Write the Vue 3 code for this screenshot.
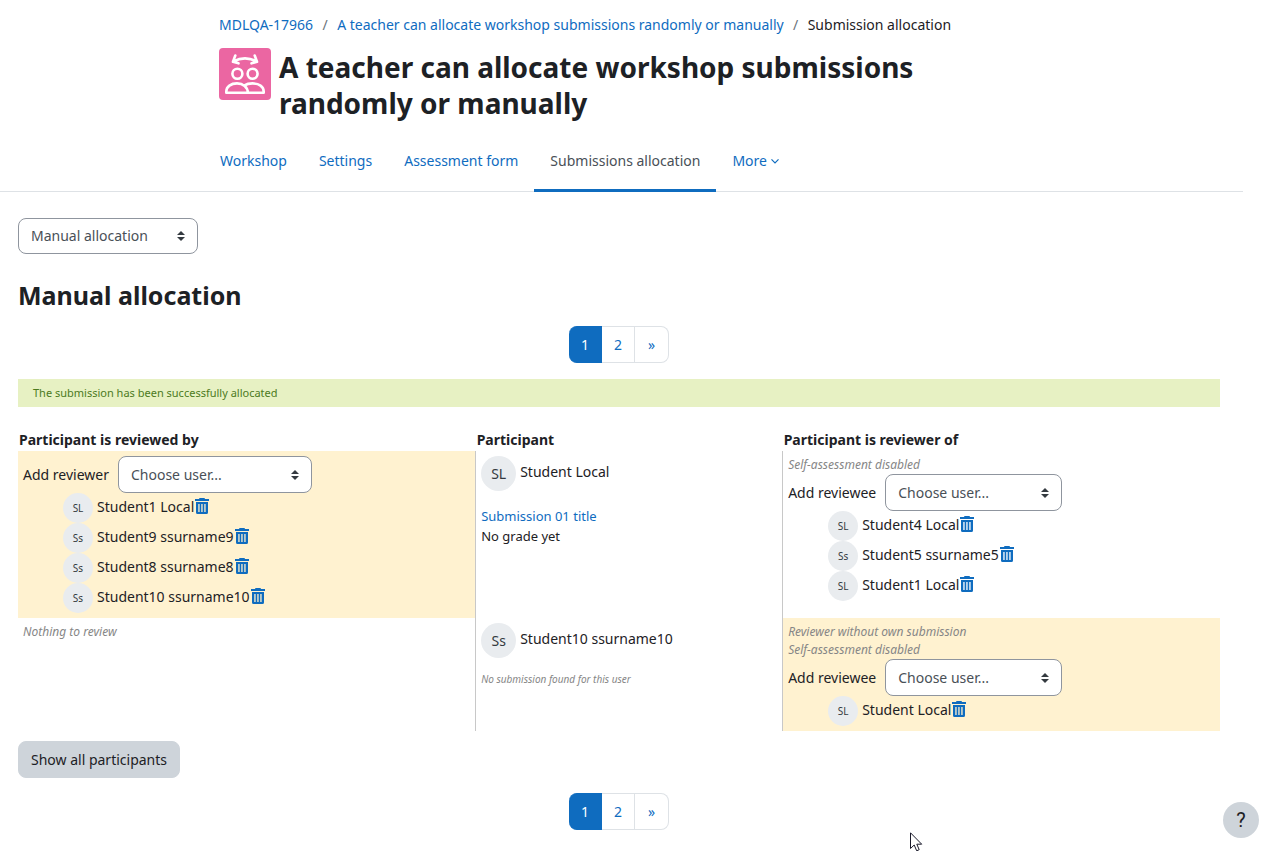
<script setup>
import { ref } from 'vue'

const tabs = [
  { label: 'Workshop' },
  { label: 'Settings' },
  { label: 'Assessment form' },
  { label: 'Submissions allocation', active: true },
  { label: 'More', menu: true },
]

const rows = [
  {
    id: 'local',
    name: 'Student Local',
    initials: 'SL',
    submission: 'Submission 01 title',
    grade: 'No grade yet',
    reviewedBy: {
      marked: true,
      canAdd: true,
      notes: [],
      people: [
        { initials: 'SL', name: 'Student1 Local' },
        { initials: 'Ss', name: 'Student9 ssurname9' },
        { initials: 'Ss', name: 'Student8 ssurname8' },
        { initials: 'Ss', name: 'Student10 ssurname10' },
      ],
    },
    reviewerOf: {
      marked: false,
      notes: ['Self-assessment disabled'],
      people: [
        { initials: 'SL', name: 'Student4 Local' },
        { initials: 'Ss', name: 'Student5 ssurname5' },
        { initials: 'SL', name: 'Student1 Local' },
      ],
    },
  },
  {
    id: 'ten',
    name: 'Student10 ssurname10',
    initials: 'Ss',
    reviewedBy: { marked: false, canAdd: false, notes: ['Nothing to review'], people: [] },
    reviewerOf: {
      marked: true,
      notes: ['Reviewer without own submission', 'Self-assessment disabled'],
      people: [{ initials: 'SL', name: 'Student Local' }],
    },
  },
]

const mode = ref('manual')
</script>

<template>
  <div class="page">
    <header class="header">
      <nav class="crumbs" aria-label="Breadcrumb">
        <a href="#">MDLQA-17966</a><span class="sep">/</span>
        <a href="#">A teacher can allocate workshop submissions randomly or manually</a><span class="sep">/</span>
        <span>Submission allocation</span>
      </nav>
      <div class="title">
        <svg class="module-icon" viewBox="0 0 52 52" aria-hidden="true">
          <rect width="52" height="52" rx="4" fill="#eb66a2" />
          <g fill="none" stroke="#fff" stroke-width="2.6" stroke-linecap="round" stroke-linejoin="round">
            <path d="M14.500 13.300Q26 7.500 37.500 13.300M16.300 7.500L14 13.800L19.500 15.300M35.700 7.500L38 13.800L32.500 15.300" />
            <circle cx="18.400" cy="25.800" r="5" />
            <circle cx="33.600" cy="25.800" r="5" />
            <path d="M7.300 44.700V43.500C7.300 38.500 12 35.400 18 35.400S28.800 39 28.800 44.700ZM25.500 37.300C27.500 36 30.500 35.400 33.500 35.400C40 35.400 44.700 38.500 44.700 43.500V44.700H28.800" />
          </g>
        </svg>
        <h1>A teacher can allocate workshop submissions randomly or manually</h1>
      </div>
    </header>

    <div class="tabbar">
      <nav class="tabs" aria-label="Workshop navigation">
        <a v-for="tab in tabs" :key="tab.label" href="#" class="tab" :class="{ active: tab.active }">
          {{ tab.label }}
          <svg v-if="tab.menu" class="chevron" viewBox="0 0 8 8" aria-hidden="true">
            <path d="M0.500 2.300L4 5.800L7.500 2.300" fill="none" stroke="currentColor" stroke-width="1.200" />
          </svg>
        </a>
      </nav>
    </div>

    <main class="content">
      <select v-model="mode" class="select mode" aria-label="Allocation mode">
        <option value="manual">Manual allocation</option>
      </select>
      <h2>Manual allocation</h2>

      <nav class="pager" aria-label="Page">
        <a href="#" class="current" aria-current="page">1</a>
        <a href="#">2</a>
        <a href="#" class="next" aria-label="Next page">»</a>
      </nav>

      <p class="message" role="status">The submission has been successfully allocated</p>

      <table class="allocations">
        <thead>
          <tr>
            <th class="col-by">Participant is reviewed by</th>
            <th class="col-who">Participant</th>
            <th class="col-of">Participant is reviewer of</th>
          </tr>
        </thead>
        <tbody>
          <tr v-for="row in rows" :key="row.id">
            <td :class="{ marked: row.reviewedBy.marked }">
              <p v-for="note in row.reviewedBy.notes" :key="note" class="note">{{ note }}</p>
              <div v-if="row.reviewedBy.canAdd" class="add">
                <label :for="'by-' + row.id">Add reviewer</label>
                <select :id="'by-' + row.id" class="select reviewer">
                  <option>Choose user...</option>
                </select>
              </div>
              <ul class="people">
                <li v-for="p in row.reviewedBy.people" :key="p.name">
                  <span class="avatar">{{ p.initials }}</span>
                  <span class="person">{{ p.name }}</span>
                  <a href="#" class="trash" :aria-label="'Deallocate ' + p.name">
                    <svg viewBox="0 0 14 16" aria-hidden="true">
                      <path fill="currentColor" fill-rule="evenodd" d="M4.500 0H9.500L10 1H14V3H0V1H4ZM1 4H13V14.500Q13 16 11.500 16H2.500Q1 16 1 14.500ZM3.300 6V14H4.600V6ZM6.300 6V14H7.600V6ZM9.300 6V14H10.600V6Z" />
                    </svg>
                  </a>
                </li>
              </ul>
            </td>
            <td>
              <div class="participant">
                <span class="avatar large">{{ row.initials }}</span>
                <span class="person">{{ row.name }}</span>
              </div>
              <div v-if="row.submission" class="submission">
                <a href="#">{{ row.submission }}</a>
                <div>{{ row.grade }}</div>
              </div>
              <p v-else class="missing">No submission found for this user</p>
            </td>
            <td :class="{ marked: row.reviewerOf.marked }">
              <p v-for="note in row.reviewerOf.notes" :key="note" class="note">{{ note }}</p>
              <div class="add">
                <label :for="'of-' + row.id">Add reviewee</label>
                <select :id="'of-' + row.id" class="select reviewee">
                  <option>Choose user...</option>
                </select>
              </div>
              <ul class="people">
                <li v-for="p in row.reviewerOf.people" :key="p.name">
                  <span class="avatar">{{ p.initials }}</span>
                  <span class="person">{{ p.name }}</span>
                  <a href="#" class="trash" :aria-label="'Deallocate ' + p.name">
                    <svg viewBox="0 0 14 16" aria-hidden="true">
                      <path fill="currentColor" fill-rule="evenodd" d="M4.500 0H9.500L10 1H14V3H0V1H4ZM1 4H13V14.500Q13 16 11.500 16H2.500Q1 16 1 14.500ZM3.300 6V14H4.600V6ZM6.300 6V14H7.600V6ZM9.300 6V14H10.600V6Z" />
                    </svg>
                  </a>
                </li>
              </ul>
            </td>
          </tr>
        </tbody>
      </table>

      <button type="button" class="show-all">Show all participants</button>

      <nav class="pager" aria-label="Page, bottom">
        <a href="#" class="current" aria-current="page">1</a>
        <a href="#">2</a>
        <a href="#" class="next" aria-label="Next page">»</a>
      </nav>
    </main>

    <button type="button" class="help" aria-label="Help">?</button>
    <svg class="pointer" viewBox="0 0 13 20" aria-hidden="true">
      <path d="M0.500 0.800V16.500L4.200 13L6.700 18.800L9.200 17.700L6.800 12.200H11.700Z" fill="#fff" stroke="#1a1a2a" />
    </svg>
  </div>
</template>

<style>
body {
  background: #fff;
  overflow: hidden;
}
</style>

<style scoped>
.page {
  margin-right: 26px;
  font-family: 'Noto Sans', 'Open Sans', sans-serif;
  font-size: 14px;
  line-height: 22px;
  color: #1d2125;
}

a {
  color: #0f6cbf;
  text-decoration: none;
}

p,
h1,
h2,
ul {
  margin: 0;
  padding: 0;
}

.header,
.tabs {
  max-width: 800px;
  margin: 0 auto;
}

.header {
  padding: 14px 5px 0 0;
}

.crumbs {
  display: flex;
  white-space: nowrap;
}

.sep {
  width: 24px;
  text-align: center;
  color: #6a737b;
}

.title {
  display: flex;
  gap: 8px;
  margin-top: 12px;
}

.module-icon {
  flex: none;
  width: 52px;
  height: 52px;
}

h1 {
  padding: 1px 0;
  font-size: 28px;
  line-height: 36px;
  font-weight: 700;
}

.tabbar {
  margin-top: 8px;
  padding-right: 5px;
  border-bottom: 1px solid #dee2e6;
}

.tabs {
  display: flex;
  margin-bottom: -1px;
  white-space: nowrap;
}

.tab {
  display: flex;
  align-items: center;
  gap: 4px;
  padding: 20px 16px 17px;
  border-bottom: 3px solid transparent;
}

.tab:first-child {
  padding-left: 1px;
}

.tab.active {
  color: #495057;
  border-color: #0f6cbf;
}

.chevron {
  width: 8px;
  height: 8px;
}

.content {
  padding: 26px 23px 0 18px;
}

.select {
  height: 37px;
  padding: 0 28px 0 12px;
  border: 1px solid #8f959e;
  border-radius: 8px;
  appearance: none;
  color: #495057;
  font: inherit;
  background: #fff url("data:image/svg+xml,%3Csvg xmlns='http://www.w3.org/2000/svg' viewBox='0 0 8 10'%3E%3Cpath fill='%23343a40' d='M4 0L0 4h8zM0 6h8L4 10z'/%3E%3C/svg%3E") no-repeat right 12px center / 8px 10px;
}

.mode {
  display: block;
  width: 180px;
  height: 36px;
}

.reviewer {
  width: 194px;
}

.reviewee {
  width: 177px;
}

h2 {
  margin-top: 25px;
  font-size: 25px;
  line-height: 32px;
}

.pager {
  display: flex;
  justify-content: center;
  margin-top: 15px;
}

.pager a {
  box-sizing: border-box;
  width: 33px;
  padding: 7px 0;
  border: 1px solid #dee2e6;
  border-left-width: 0;
  line-height: 21px;
  text-align: center;
}

.pager .current {
  border-color: #0f6cbf;
  border-radius: 8px 0 0 8px;
  background: #0f6cbf;
  color: #fff;
}

.pager .next {
  width: 34px;
  border-radius: 0 8px 8px 0;
}

.message {
  margin-top: 16px;
  padding: 4px 15px;
  background: #e7f1c3;
  color: #4c7a1d;
  font-size: 11px;
  line-height: 20px;
}

.allocations {
  width: 100%;
  margin-top: 22px;
  border-collapse: collapse;
  table-layout: fixed;
}

th {
  padding: 0 1px;
  text-align: left;
}

.col-by {
  width: 38.1%;
}

.col-who {
  width: 25.5%;
}

.col-of {
  width: 36.4%;
}

td {
  padding: 5px;
  vertical-align: top;
}

td + td {
  border-left: 1px solid #c8c8c8;
}

.marked {
  background: #fff2d0;
}

.note,
.missing {
  color: #868686;
  font-size: 12px;
  line-height: 18px;
  font-style: italic;
}

.add {
  display: flex;
  align-items: center;
  gap: 9px;
}

.people {
  padding-left: 40px;
  list-style: none;
}

.people li {
  display: flex;
  align-items: center;
  height: 30px;
}

.avatar {
  display: flex;
  flex: none;
  align-items: center;
  justify-content: center;
  width: 30px;
  height: 30px;
  margin-right: 4px;
  border-radius: 50%;
  background: #e9ecef;
  color: #343a40;
  font-size: 10px;
}

.large {
  width: 35px;
  height: 35px;
  font-size: 14px;
}

.person {
  padding-bottom: 3px;
}

.trash {
  display: flex;
  margin-left: 1px;
  padding-bottom: 4px;
}

.trash svg {
  width: 14px;
  height: 16px;
}

.participant {
  display: flex;
  align-items: center;
}

.submission {
  margin-top: 15px;
  font-size: 13px;
  line-height: 20px;
}

.missing {
  margin-top: 12px;
  font-size: 10px;
}

.show-all {
  display: block;
  margin-top: 10px;
  padding: 7px 12px;
  border: 1px solid #ced4da;
  border-radius: 8px;
  background: #ced4da;
  color: #1d2125;
  font: inherit;
  line-height: 21px;
}

.help {
  position: fixed;
  right: 10px;
  bottom: 13px;
  width: 36px;
  height: 36px;
  padding: 0;
  border: 0;
  border-radius: 50%;
  background: #ced4da;
  color: #1d2125;
  font: 400 20px Roboto, sans-serif;
}

.pointer {
  position: fixed;
  left: 910px;
  top: 832px;
  width: 13px;
  height: 20px;
}
</style>
